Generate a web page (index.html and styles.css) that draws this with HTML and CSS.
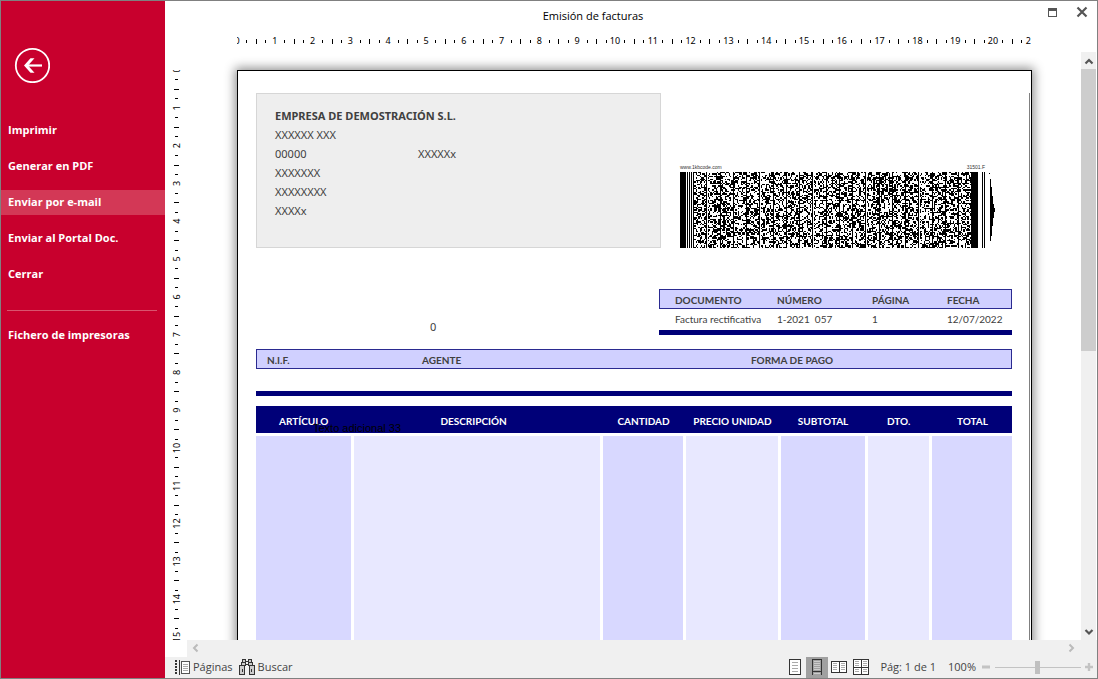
FILE: index.html
```html
<!DOCTYPE html>
<html lang="es">
<head>
<meta charset="utf-8">
<title>Emisión de facturas</title>
<link rel="stylesheet" href="styles.css">
</head>
<body>
<div class="window">
  <nav class="sidebar">
    <button class="back" aria-label="Volver">
      <svg width="36" height="36" viewBox="0 0 36 36" fill="none" stroke="#fff"><circle cx="18.500" cy="18.500" r="16.700" stroke-width="1.800"/><path d="M28 18.500H13" stroke-width="2.200"/><path d="M16.500 11.300h4L14 18.500l6.500 7.200h-4L10 18.500z" fill="#fff" stroke="none"/></svg>
    </button>
    <div class="menu">
      <button class="item">Imprimir</button>
      <button class="item">Generar en PDF</button>
      <button class="item active">Enviar por e-mail</button>
      <button class="item">Enviar al Portal Doc.</button>
      <button class="item">Cerrar</button>
    </div>
    <hr class="divider">
    <button class="item">Fichero de impresoras</button>
  </nav>

  <main class="main">
    <header class="titlebar">
      <h1 class="title">Emisión de facturas</h1>
      <div class="controls">
        <button class="icon" aria-label="Maximizar"><svg width="12" height="12" viewBox="0 0 12 12" shape-rendering="crispEdges"><path d="M1 2h9v9H1zM2 5v5h7V5z" fill="#555" fill-rule="evenodd"/></svg></button>
        <button class="icon" aria-label="Cerrar ventana"><svg width="12" height="12" viewBox="0 0 12 12"><path d="M1.500 1.500l9 9M10.500 1.500l-9 9" stroke="#555" stroke-width="2.200"/></svg></button>
      </div>
    </header>

    <div class="stage">
      <div class="hruler"><svg id="hruler" width="100%" height="14"></svg></div>
      <div class="vruler"><svg id="vruler" width="22" height="100%"></svg></div>

      <div class="viewport">
        <article class="sheet">
          <div class="content">
            <div class="top">
              <section class="company">
                <h2 class="name">EMPRESA DE DEMOSTRACIÓN S.L.</h2>
                <p>XXXXXX XXX</p>
                <p class="split"><span>00000</span><span>XXXXXx</span></p>
                <p>XXXXXXX</p>
                <p>XXXXXXXX</p>
                <p>XXXXx</p>
              </section>
              <figure class="code">
                <figcaption class="caption"><span>www.1kbcode.com</span><span>31501.F</span></figcaption>
                <svg id="barcode" width="317" height="76" viewBox="0 0 317 76" shape-rendering="crispEdges"></svg>
              </figure>
            </div>

            <div class="middle">
              <p class="zero">0</p>
              <table class="doc">
                <colgroup><col class="d1"><col class="d2"><col class="d3"><col class="d4"></colgroup>
                <thead><tr><th>DOCUMENTO</th><th>NÚMERO</th><th>PÁGINA</th><th>FECHA</th></tr></thead>
                <tbody><tr><td>Factura rectificativa</td><td>1-2021&nbsp; 057</td><td>1</td><td>12/07/2022</td></tr></tbody>
              </table>
            </div>

            <div class="terms"><span>N.I.F.</span><span>AGENTE</span><span>FORMA DE PAGO</span></div>
            <div class="rule"></div>

            <div class="lines-wrap">
              <table class="lines">
                <colgroup><col class="c1"><col class="c2"><col class="c3"><col class="c4"><col class="c5"><col class="c6"><col class="c7"></colgroup>
                <thead><tr><th>ARTÍCULO</th><th class="desc">DESCRIPCIÓN</th><th>CANTIDAD</th><th>PRECIO UNIDAD</th><th>SUBTOTAL</th><th>DTO.</th><th>TOTAL</th></tr></thead>
                <tbody><tr><td></td><td></td><td></td><td></td><td></td><td></td><td></td></tr></tbody>
              </table>
              <span class="extra">Texto adicional 33</span>
            </div>
          </div>
        </article>
      </div>

      <div class="vscroll">
        <button class="arrow" aria-label="Subir"><svg width="10" height="8" viewBox="0 0 10 8"><path d="M1.500 6.500L5 3l3.500 3.500" fill="none" stroke="#555" stroke-width="2.200"/></svg></button>
        <div class="thumb"></div>
        <button class="arrow bottom" aria-label="Bajar"><svg width="10" height="8" viewBox="0 0 10 8"><path d="M1.500 2L5 5.500 8.500 2" fill="none" stroke="#555" stroke-width="2.200"/></svg></button>
      </div>
      <div class="hscroll">
        <button class="arrow" aria-label="Izquierda"><svg width="8" height="10" viewBox="0 0 8 10"><path d="M6.500 1.500L3 5l3.500 3.500" fill="none" stroke="#bbb" stroke-width="2"/></svg></button>
        <button class="arrow" aria-label="Derecha"><svg width="8" height="10" viewBox="0 0 8 10"><path d="M1.500 1.500L5 5 1.500 8.500" fill="none" stroke="#bbb" stroke-width="2"/></svg></button>
      </div>
    </div>

    <footer class="status">
      <button class="tool">
        <svg width="15" height="15" viewBox="0 0 15 15" shape-rendering="crispEdges" fill="none"><path d="M1 0v15" stroke="#333" stroke-width="2" stroke-dasharray="2 1"/><path d="M4.500 0v15" stroke="#333"/><rect x="6.500" y="1.500" width="8" height="12" fill="#fff" stroke="#555"/><path d="M8 4.500h5M8 6.500h5M8 8.500h5M8 10.500h5" stroke="#aaa"/></svg>
        <span>Páginas</span>
      </button>
      <button class="tool">
        <svg width="16" height="16" viewBox="0 0 16 16" shape-rendering="crispEdges" fill="#ccc" stroke="#333"><rect x="3.500" y=".5" width="3" height="3"/><rect x="9.500" y=".5" width="3" height="3"/><rect x="2.500" y="3.500" width="4" height="3"/><rect x="9.500" y="3.500" width="4" height="3"/><path d="M7 2.500h2M7 5.500h2" fill="none"/><rect x=".5" y="6.500" width="5" height="9"/><rect x="10.500" y="6.500" width="5" height="9"/><path d="M3.500 10v3M12.500 10v3" fill="none"/></svg>
        <span>Buscar</span>
      </button>
      <div class="views">
        <button class="view" aria-label="Una página"><svg width="12" height="16" viewBox="0 0 12 16" shape-rendering="crispEdges"><rect x=".5" y=".5" width="11" height="15" fill="#fff" stroke="#333"/><path d="M3 3.500h6M3 6.500h6M3 9.500h6M3 12.500h6" stroke="#aaa"/></svg></button>
        <button class="view on" aria-label="Continuo"><svg width="10" height="16" viewBox="0 0 10 16" shape-rendering="crispEdges"><path d="M.5 0v16M9.500 0v16M0 .5h10M0 12.500h10" stroke="#333"/><path d="M2 2.500h6M2 4.500h6M2 6.500h6M2 8.500h6M2 10.500h6M2 14.500h6" stroke="#ccc"/></svg></button>
        <button class="view" aria-label="Dos páginas"><svg width="16" height="12" viewBox="0 0 16 12" shape-rendering="crispEdges"><rect x=".5" y=".5" width="15" height="11" fill="#fff" stroke="#333"/><path d="M8 0v12" stroke="#333"/><path d="M2 2.500h4M2 4.500h4M2 6.500h4M2 8.500h4M10 2.500h4M10 4.500h4M10 6.500h4M10 8.500h4" stroke="#aaa"/></svg></button>
        <button class="view" aria-label="Cuatro páginas"><svg width="16" height="16" viewBox="0 0 16 16" shape-rendering="crispEdges"><rect x=".5" y=".5" width="15" height="15" fill="#fff" stroke="#333"/><path d="M8 0v16M0 8.500h16" stroke="#333"/><path d="M2 2.500h4M2 4.500h4M2 6.500h4M10 2.500h4M10 4.500h4M10 6.500h4M2 10.500h4M2 12.500h4M10 10.500h4M10 12.500h4" stroke="#aaa"/></svg></button>
      </div>
      <span class="page-no">Pág: 1 de 1</span>
      <label class="percent" for="zoom">100%</label>
      <button class="step" aria-label="Alejar"><svg width="8" height="8" viewBox="0 0 8 8"><path d="M0 4h8" stroke="#c3c3c3" stroke-width="3"/></svg></button>
      <input class="zoom" id="zoom" type="range" min="0" max="100" value="49">
      <button class="step" aria-label="Acercar"><svg width="8" height="8" viewBox="0 0 8 8"><path d="M0 4h8M4 0v8" stroke="#c3c3c3" stroke-width="2.400"/></svg></button>
    </footer>
  </main>
</div>
<script src="app.js"></script>
</body>
</html>
```

FILE: styles.css
```css
* { box-sizing: border-box; }
html, body { height: 100%; margin: 0; }
body { font: 11px/16px "Open Sans", "Noto Sans", sans-serif; color: #000; }
h1, h2, p, figure { margin: 0; }
button { border: 0; padding: 0; background: none; font: inherit; color: inherit; display: flex; align-items: center; justify-content: center; }
svg { display: block; flex: none; }
table { border-spacing: 0; table-layout: fixed; }
th, td { padding: 0; }

.window { display: flex; height: 100vh; border: 1px solid #808080; background: #fff; overflow: hidden; }

.sidebar { flex: none; width: 164px; background: #c8002d; color: #fff; padding-top: 46px; }
.back { margin-left: 13px; }
.menu { display: flex; flex-direction: column; gap: 11px; margin-top: 35px; }
.item { width: 100%; height: 25px; padding: 0 0 1px 7px; justify-content: flex-start; font-weight: 700; }
.item.active { background: #d33856; }
.divider { height: 1px; margin: 23px 8px 12px 6px; border: 0; background: #d9546e; }

.main { flex: 1; min-width: 0; display: flex; flex-direction: column; }
.titlebar { position: relative; height: 29px; display: flex; align-items: center; justify-content: center; padding-right: 76px; }
.title { font-size: 11px; font-weight: 400; line-height: 16px; }
.controls { position: absolute; top: 5px; right: 9px; display: flex; gap: 17px; }

.stage { flex: 1; min-height: 0; display: grid; grid-template: 22px minmax(0, 1fr) 17px / 22px minmax(0, 1fr) 16px; }
.hruler { grid-area: 1 / 2; padding: 3px 50px 0 50px; }
.vruler { grid-area: 2 / 1; padding-top: 18px; overflow: hidden; }
.ruler-text { font: 9px "Noto Sans", sans-serif; text-anchor: middle; }
.viewport { grid-area: 2 / 2; overflow: hidden; padding: 18px 49px 0 50px; }
.vscroll { grid-area: 2 / 3; margin-right: 1px; background: #f0f0f0; display: flex; flex-direction: column; }
.hscroll { grid-area: 3 / 2 / auto / span 2; background: #f0f0f0; display: flex; justify-content: space-between; padding: 0 21px 1px 4px; }
.arrow { flex: none; height: 17px; }
.hscroll .arrow { height: 16px; }
.thumb { flex: 0 0 48%; background: #cdcdcd; }
.bottom { margin-top: auto; }

.sheet { border: 1px solid #000; box-shadow: 0 0 10px 2px rgba(0, 0, 0, .45); padding: 22px 1px 0 18px; color: #404040; font-family: Lato, sans-serif; }
.content { border-right: 1px solid #808080; padding-right: 17px; }
.top { display: flex; justify-content: space-between; }
.company { flex: 0 1 405px; height: 155px; background: #eee; border: 1px solid #d6d6d6; padding: 12px 18px; font: 11px/19px "Noto Sans", sans-serif; }
.name { font: 700 11px/19px "Noto Sans", sans-serif; }
.split { display: grid; grid-template-columns: 143px 1fr; }
.code { width: 332px; padding-top: 70px; color: #333; }
.caption { display: flex; justify-content: space-between; width: 305px; padding-bottom: 1px; font: 5px/8px "Liberation Sans", sans-serif; }

.middle { display: flex; justify-content: space-between; padding: 41px 0 14px; font-size: 10px; }
.zero { padding: 30px 0 0 174px; font: 11px/16px "Noto Sans", sans-serif; }
.doc { width: 353px; text-align: left; border-bottom: 5px solid #000078; }
.d1 { width: 118px; }
.d2 { width: 95px; }
.d3 { width: 75px; }
.doc th { height: 20px; padding-top: 2px; background: #d0d0ff; border: solid #2a2a90; border-width: 1px 0; font-weight: 700; }
.doc th:first-child { border-left-width: 1px; padding-left: 15px; }
.doc th:last-child { border-right-width: 1px; }
.doc td:first-child { padding-left: 16px; }
.doc td { height: 21px; padding-bottom: 2px; white-space: nowrap; }
.terms { display: grid; grid-template-columns: 155px 329px 1fr; height: 20px; padding: 2px 0 0 10px; background: #d0d0ff; border: 1px solid #2a2a90; font-size: 10px; font-weight: 700; }
.rule { height: 5px; margin: 22px 0 10px; background: #000078; }

.lines-wrap { position: relative; }
.lines { width: 100%; font-size: 10px; }
.lines th { height: 27px; padding: 2px 0 0 4px; background: #000078; color: #fff; white-space: nowrap; font-weight: 700; }
.lines th:first-child { padding-left: 0; }
.lines .desc { padding-right: 8px; }
.lines td { height: 600px; background: #d8d8ff; border: solid #fff; border-width: 3px 0 0 3px; }
.lines td:first-child { border-left-width: 0; }
.lines td:nth-child(even) { background: #e8e8ff; }
.c1 { width: 12.6%; }
.c2 { width: 32.9%; }
.c3 { width: 11%; }
.c4 { width: 12.5%; }
.c5 { width: 11.5%; }
.c6 { width: 8.5%; }
.c7 { width: 11%; }
.extra { position: absolute; left: 57px; top: 14px; color: #000; font: 11px/16px "Liberation Sans", sans-serif; white-space: nowrap; }

.status { flex: none; height: 21px; display: flex; align-items: center; background: #f0f0f0; color: #444; padding: 0 4px 1px 10px; white-space: nowrap; }
.tool { gap: 3px; margin-right: 6px; }
.views { display: flex; margin-left: auto; margin-right: 8px; }
.view { width: 22px; height: 21px; }
.view.on { background: #a0a0a0; }
.percent { margin: 0 6px 0 12px; }
.zoom { appearance: none; width: 86px; height: 14px; margin: 0 4px 0 5px; background: linear-gradient(#c3c3c3, #c3c3c3) center / 100% 1px no-repeat; }
.zoom::-webkit-slider-thumb { appearance: none; width: 5px; height: 13px; background: #c0c0c0; }
```

FILE: app.js
```js
const NS = "http://www.w3.org/2000/svg";
const CM = 37.8;

function add(parent, name, attrs, text) {
  const el = document.createElementNS(NS, name);
  for (const key in attrs) el.setAttribute(key, attrs[key]);
  if (text !== undefined) el.textContent = text;
  parent.appendChild(el);
}

const h = document.getElementById("hruler");
for (let i = 0; i <= 21; i++) {
  const x = i * CM;
  add(h, "text", { x: x, y: 11, class: "ruler-text" }, i);
  [0.25, 0.5, 0.75].forEach(f => add(h, "rect", {
    x: Math.round(x + f * CM), y: f === 0.5 ? 6 : 7, width: 1, height: f === 0.5 ? 5 : 3
  }));
}

const v = document.getElementById("vruler");
for (let i = 0; i <= 15; i++) {
  const y = i * CM;
  add(v, "text", { transform: `translate(15 ${y}) rotate(-90)`, class: "ruler-text" }, i);
  [0.25, 0.5, 0.75].forEach(f => add(v, "rect", {
    x: f === 0.5 ? 9 : 10, y: Math.round(y + f * CM), width: f === 0.5 ? 5 : 3, height: 1
  }));
}

/* Stacked matrix code: solid guards, 21 tiles of modules, closing arc. */
const code = document.getElementById("barcode");
let seed = 31501;
const random = () => (seed = (seed * 16807) % 2147483647) / 2147483647;
const W = 1.325, H = 1.3334;
let d = "M0 0h6v76h-6zM7 0h1v76h-1zM9 0h1v76h-1zM11 0h1v76h-1zM291 0h7v76h-7zM302 0h1v76h-1zM304 0h1v76h-1z";
for (let col = 0; col < 210; col++) {
  const guard = col % 10 === 0;
  for (let row = 0; row < 57; row++) {
    const limit = guard ? 1 : 0.47;
    if (random() < limit) {
      const x = Math.round(13 + col * W), y = Math.round(row * H);
      const w = guard ? 1 : Math.round(13 + (col + 1) * W) - x, t = Math.round((row + 1) * H) - y;
      d += `M${x} ${y}h${w}v${t}h${-w}z`;
    }
  }
}
add(code, "path", { d });
add(code, "path", { d: "M309 1h1v1h-1zM310 7h1v8h1v9h1v8h1v4h1v4h-1v6h-1v8h-1v10h-1v5h-1z" });
```
